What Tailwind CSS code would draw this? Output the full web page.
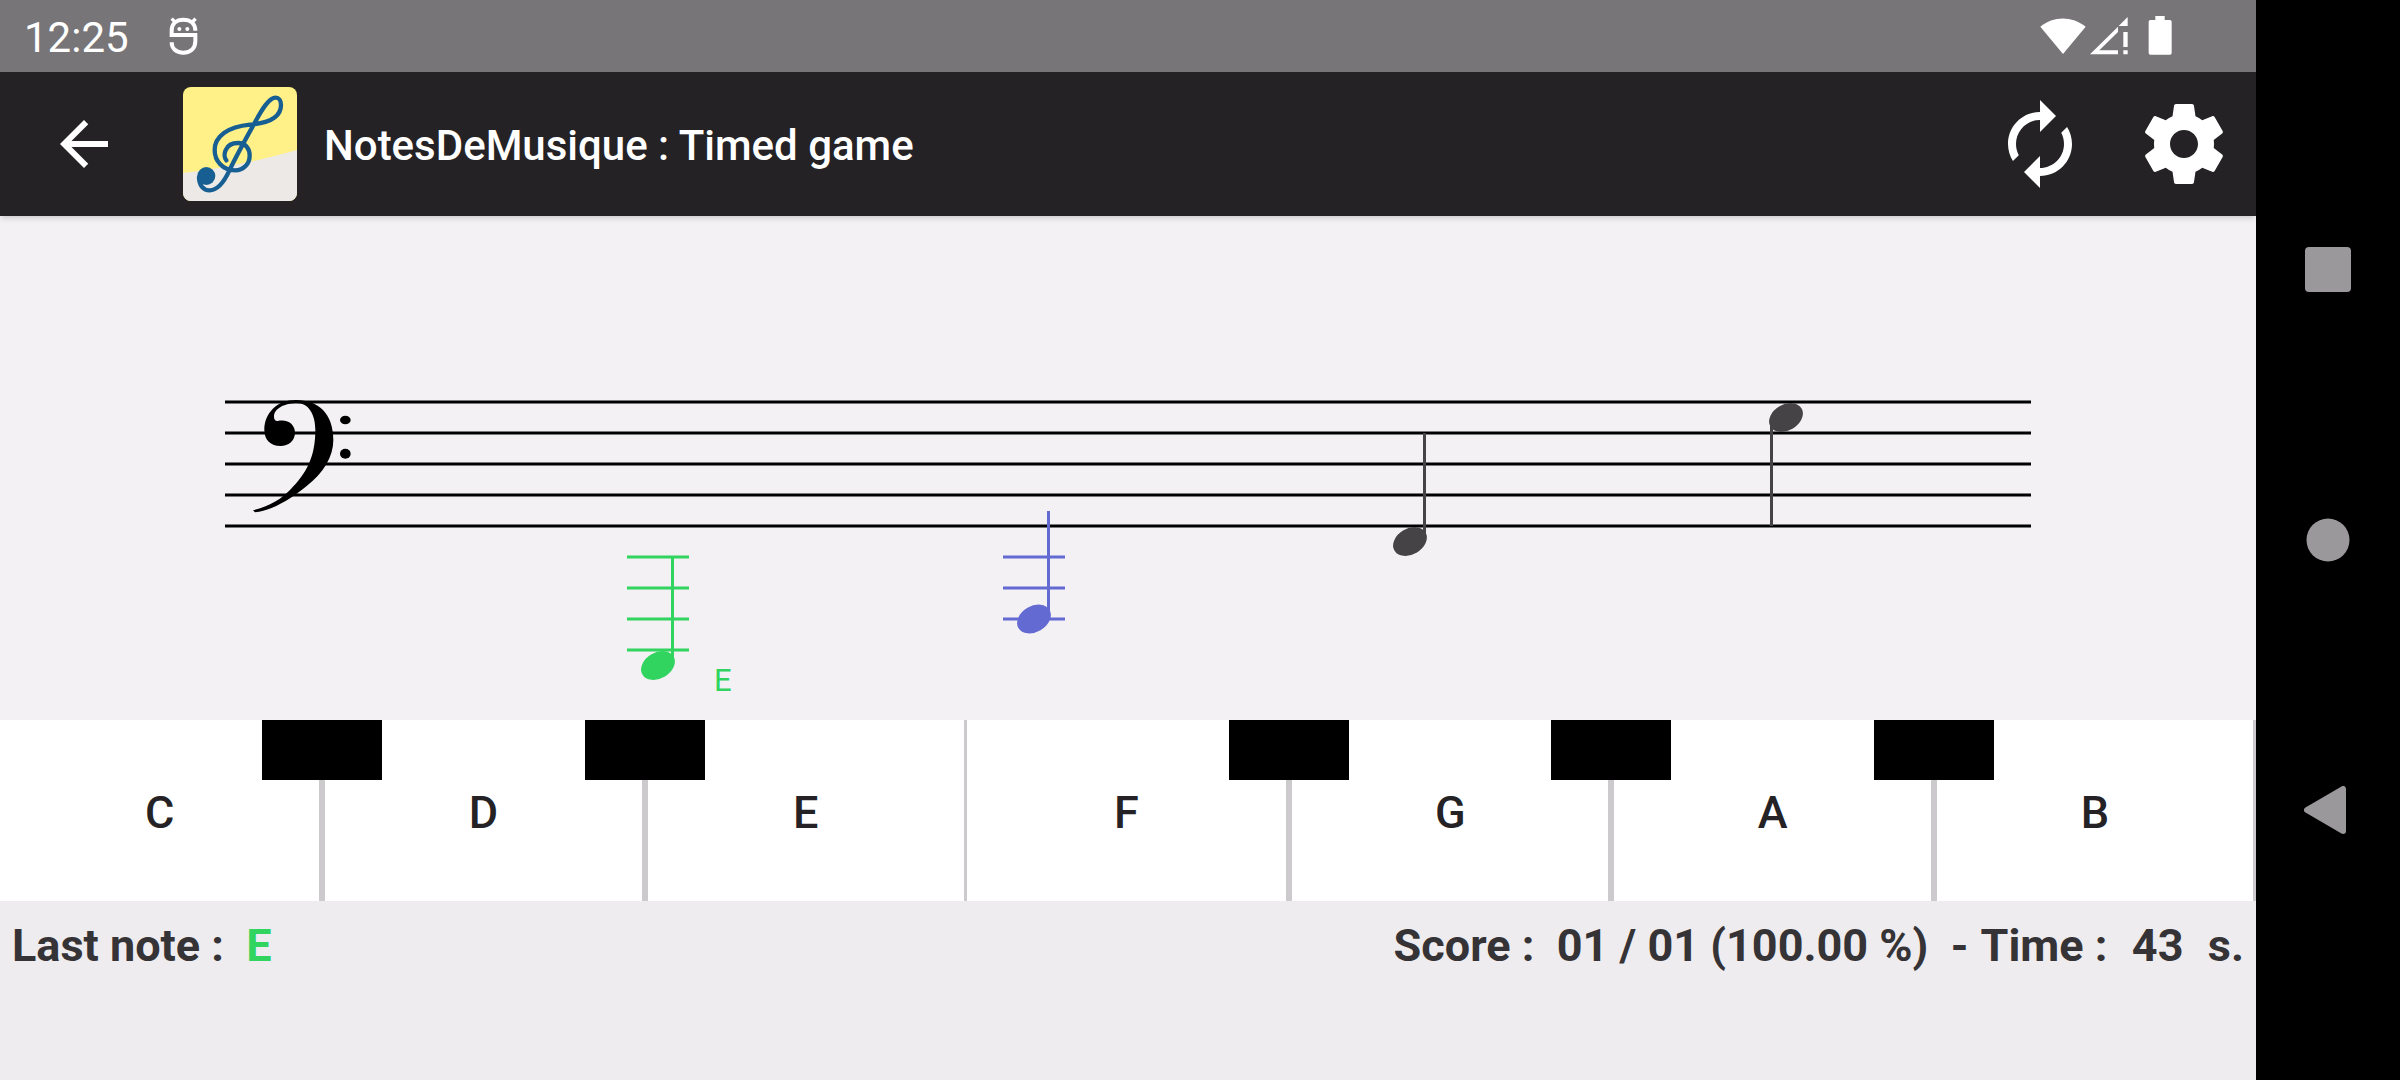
<!DOCTYPE html>
<html lang="en">
<head>
<meta charset="utf-8">
<meta name="viewport" content="width=device-width, initial-scale=1">
<title>NotesDeMusique : Timed game</title>
<script src="https://cdn.jsdelivr.net/npm/@tailwindcss/browser@4"></script>
</head>
<body class="flex min-h-screen bg-[#eeecef] font-[Roboto,sans-serif]">
  <div class="flex min-w-0 flex-1 flex-col">
    <!-- Status bar -->
    <div class="flex h-[72px] items-center bg-[#787579] pl-6 pr-[84px] text-white">
      <time class="pt-1 text-[42px] leading-[48px]">12:25</time>
      <svg class="ml-10 h-[39px] w-[29px]" viewBox="0 0 87 117" fill="none" stroke="#fff" stroke-width="12">
        <path d="M79 41C79 20 64 8 43 8S8 20 8 41V54H79V72C79 94 65 107 43 107S8 94 8 76"/>
        <path d="M8 5L20 17M80 5L67 17" stroke-width="10"/>
        <circle cx="31" cy="36" r="6" fill="#fff" stroke="none"/>
        <circle cx="55" cy="36" r="6" fill="#fff" stroke="none"/>
      </svg>
      <div class="ml-auto flex items-center">
        <svg class="h-10 w-[46px]" viewBox="0 0 138 120" fill="#fff"><path d="M1 32C40-1 96-1 137 32L69 114Z"/></svg>
        <svg class="ml-1 h-10 w-[38px]" viewBox="0 0 114 120" fill="#fff"><path fill-rule="evenodd" d="M0 115L84 32V48L28 103H84V115ZM86 30L113 3V30ZM100 48H113V93H100ZM100 103H113V115H100Z"/></svg>
        <svg class="ml-5 h-10 w-6" viewBox="0 0 72 120" fill="#fff"><path d="M22 0H50V12H66Q71 12 71 17V111Q71 116 66 116H7Q2 116 2 111V17Q2 12 7 12H22Z"/></svg>
      </div>
    </div>

    <!-- App bar -->
    <header class="z-10 flex h-36 items-center bg-[#242225] pl-12 pr-6 text-white shadow-md">
      <button type="button" aria-label="Back" class="size-[72px]">
        <svg class="size-full" viewBox="0 0 24 24" fill="#fff"><path d="M20 11H7.830l5.590-5.590L12 4l-8 8 8 8 1.410-1.410L7.830 13H20v-2z"/></svg>
      </button>
      <svg class="ml-[63px] size-[114px] rounded-lg" viewBox="0 0 342 342">
        <path fill="#fff087" d="M0 0H342V342H0Z"/>
        <path fill="#ece9e6" d="M0 258Q170 238 342 189V342H0Z"/>
        <g transform="translate(-69 -51)">
          <path fill="none" stroke="#175f92" stroke-width="13" stroke-linecap="round" d="M199 271C188 258 193 219 234 219C258 219 269 237 269 257C269 281 251 301 225 301C188 301 164 273 164 240C164 200 203 170 270 164C330 159 363 142 363 105C363 91 356 83 347 83C327 83 306 118 285 157C257 207 229 257 208 302C187 347 169 361 149 361C130 361 117 346 117 322"/>
          <circle cx="139" cy="318" r="27" fill="#175f92"/>
        </g>
      </svg>
      <h1 class="ml-[27px] min-w-0 flex-1 truncate pt-1 text-[42px] font-medium leading-[52px]">NotesDeMusique : Timed game</h1>
      <div class="flex gap-12">
        <button type="button" aria-label="Restart" class="size-24">
          <svg class="size-full" viewBox="0 0 24 24" fill="#fff"><path d="M12 6v3l4-4-4-4v3c-4.420 0-8 3.580-8 8 0 1.570.460 3.030 1.240 4.260L6.700 14.800c-.450-.830-.700-1.790-.700-2.800 0-3.310 2.690-6 6-6zm6.760 1.740L17.300 9.200c.440.840.700 1.790.700 2.800 0 3.310-2.690 6-6 6v-3l-4 4 4 4v-3c4.420 0 8-3.580 8-8 0-1.570-.460-3.030-1.240-4.260z"/></svg>
        </button>
        <button type="button" aria-label="Settings" class="size-24">
          <svg class="size-full" viewBox="0 0 24 24" fill="#fff"><path d="M19.430 12.980c.040-.320.070-.640.070-.980s-.030-.660-.070-.980l2.110-1.650c.190-.150.240-.420.120-.640l-2-3.460c-.120-.220-.390-.300-.610-.220l-2.490 1c-.520-.400-1.080-.730-1.690-.980l-.380-2.650C14.460 2.180 14.250 2 14 2h-4c-.250 0-.460.180-.490.420l-.380 2.650c-.610.250-1.170.590-1.690.980l-2.490-1c-.230-.090-.490 0-.610.220l-2 3.460c-.130.220-.070.490.120.640l2.110 1.650c-.040.320-.070.650-.070.980s.030.660.070.980l-2.110 1.650c-.190.150-.240.420-.120.640l2 3.460c.120.220.390.300.610.220l2.490-1c.520.400 1.080.730 1.690.980l.380 2.650c.030.240.240.420.490.420h4c.250 0 .460-.180.490-.420l.380-2.650c.610-.250 1.170-.590 1.690-.980l2.490 1c.230.090.490 0 .610-.220l2-3.460c.120-.220.070-.490-.120-.640l-2.110-1.650zM12 15.500c-1.930 0-3.500-1.570-3.500-3.500s1.570-3.500 3.500-3.500 3.500 1.570 3.500 3.500-1.570 3.500-3.500 3.500z"/></svg>
        </button>
      </div>
    </header>

    <main>
      <!-- Staff: lines are 31 units apart -->
      <svg class="block w-full bg-[#f3f1f4]" viewBox="0 216 2256 504" role="img" aria-label="Bass clef staff with four notes">
        <path stroke="#000" stroke-width="3" d="M225 402H2031M225 433H2031M225 464H2031M225 495H2031M225 526H2031"/>
        <g transform="translate(210 380) scale(.33333)">
          <path d="M163 150C163 100 200 60 258 60C325 60 370 100 370 180C370 230 340 280 290 318C240 358 190 390 135 397L129 391C180 378 215 356 240 330C290 280 316 230 316 150C316 100 294 70 262 69C225 69 192 85 192 110C192 118 196 124 203 123C235 116 255 135 255 158C255 182 235 198 212 198C182 198 163 180 163 150Z"/>
          <ellipse cx="406" cy="120" rx="16" ry="13"/>
          <ellipse cx="406" cy="221" rx="16" ry="15"/>
        </g>
        <g fill="#30d45f" stroke="#30d45f">
          <path stroke-width="3" d="M627 557H689M627 588H689M627 619H689M627 650H689M672.500 557V660"/>
          <ellipse cx="658" cy="665.500" rx="18" ry="13" stroke="none" transform="rotate(-30 658 665.500)"/>
          <text x="714" y="691" font-size="31" stroke="none">E</text>
        </g>
        <g fill="#636ad2" stroke="#636ad2">
          <path stroke-width="3" d="M1003 557H1065M1003 588H1065M1003 619H1065M1048.500 511V613"/>
          <ellipse cx="1034" cy="619" rx="18" ry="13" stroke="none" transform="rotate(-30 1034 619)"/>
        </g>
        <g fill="#464347" stroke="#464347">
          <path stroke-width="3" d="M1424.500 433V536M1771.500 424V526"/>
          <ellipse cx="1410" cy="541.500" rx="18" ry="13" stroke="none" transform="rotate(-30 1410 541.500)"/>
          <ellipse cx="1786" cy="417.500" rx="18" ry="13" stroke="none" transform="rotate(-30 1786 417.500)"/>
        </g>
      </svg>

      <!-- Keyboard -->
      <div class="grid h-[181px] grid-cols-7 text-[45px] font-medium leading-[52px] text-[#242225]">
        <div class="relative">
          <button type="button" class="size-full border-r-[3px] border-[#cccacd] bg-white pt-1">C</button>
          <button type="button" aria-label="C sharp" class="absolute -right-15 top-0 z-10 h-15 w-30 bg-black"></button>
        </div>
        <div class="relative">
          <button type="button" class="size-full border-x-[3px] border-[#cccacd] bg-white pt-1">D</button>
          <button type="button" aria-label="D sharp" class="absolute -right-15 top-0 z-10 h-15 w-30 bg-black"></button>
        </div>
        <button type="button" class="border-x-[3px] border-[#cccacd] bg-white pt-1">E</button>
        <div class="relative">
          <button type="button" class="size-full border-r-[3px] border-[#cccacd] bg-white pt-1">F</button>
          <button type="button" aria-label="F sharp" class="absolute -right-15 top-0 z-10 h-15 w-30 bg-black"></button>
        </div>
        <div class="relative">
          <button type="button" class="size-full border-x-[3px] border-[#cccacd] bg-white pt-1">G</button>
          <button type="button" aria-label="G sharp" class="absolute -right-15 top-0 z-10 h-15 w-30 bg-black"></button>
        </div>
        <div class="relative">
          <button type="button" class="size-full border-x-[3px] border-[#cccacd] bg-white pt-1">A</button>
          <button type="button" aria-label="A sharp" class="absolute -right-15 top-0 z-10 h-15 w-30 bg-black"></button>
        </div>
        <button type="button" class="border-x-[3px] border-[#cccacd] bg-white pt-1">B</button>
      </div>

      <!-- Score line -->
      <div class="flex justify-between whitespace-pre px-3 pt-[18px] text-[45px] font-bold leading-[54px] text-[#353336]">
        <p>Last note :  <span class="text-[#30d45f]">E</span></p>
        <p class="flex gap-[2px]"><span>Score :  01 / 01 (100.00 %)  -</span><span> Time :  </span><span>43  </span><span>s.</span></p>
      </div>
    </main>
  </div>

  <!-- System navigation -->
  <nav aria-label="System" class="flex w-36 flex-none flex-col justify-center bg-black">
    <button type="button" aria-label="Recent apps" class="flex h-1/4 items-center justify-center">
      <svg class="size-12" viewBox="0 0 48 48" fill="#9a989b"><rect x="1" y="1" width="46" height="45" rx="4"/></svg>
    </button>
    <button type="button" aria-label="Home" class="flex h-1/4 items-center justify-center">
      <svg class="size-12" viewBox="0 0 48 48" fill="#9a989b"><circle cx="24" cy="24" r="21.500"/></svg>
    </button>
    <button type="button" aria-label="Back" class="flex h-1/4 items-center justify-center">
      <svg class="size-12" viewBox="0 0 48 48" fill="#9a989b" stroke="#9a989b" stroke-width="6" stroke-linejoin="round"><path d="M3 24L39 3V45Z"/></svg>
    </button>
  </nav>
</body>
</html>
